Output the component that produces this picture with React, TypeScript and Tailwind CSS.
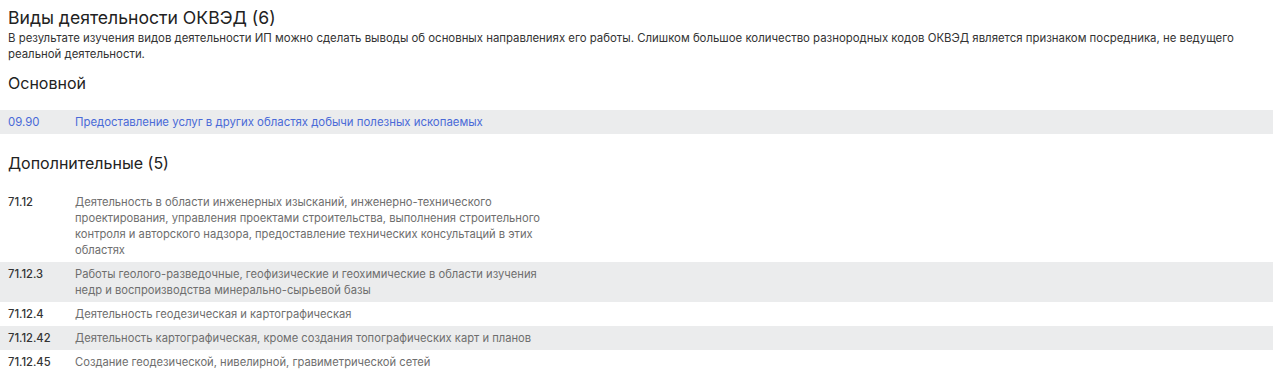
const MAIN = { code: '09.90', title: 'Предоставление услуг в других областях добычи полезных ископаемых' };

const EXTRA = [
  {
    code: '71.12',
    title:
      'Деятельность в области инженерных изысканий, инженерно-технического проектирования, управления проектами строительства, выполнения строительного контроля и авторского надзора, предоставление технических консультаций в этих областях',
  },
  {
    code: '71.12.3',
    title:
      'Работы геолого-разведочные, геофизические и геохимические в области изучения недр и воспроизводства минерально-сырьевой базы',
  },
  { code: '71.12.4', title: 'Деятельность геодезическая и картографическая' },
  { code: '71.12.42', title: 'Деятельность картографическая, кроме создания топографических карт и планов' },
  { code: '71.12.45', title: 'Создание геодезической, нивелирной, гравиметрической сетей' },
];

export default function App() {
  return (
    <div className="min-h-[381px] bg-white pt-[6px] pr-[7px] font-['Inter',sans-serif] text-[#222]">
      <div className="px-2">
        <h1 className="text-[17.6px] leading-6 text-[#222]">Виды деятельности ОКВЭД (6)</h1>
        <p className="pr-6 text-[11.4px] leading-4 text-[#333]">
          В результате изучения видов деятельности ИП можно сделать выводы об основных направлениях его работы. Слишком большое
          количество разнородных кодов ОКВЭД является признаком посредника, не ведущего реальной деятельности.
        </p>
        <h2 className="mt-[11px] text-[16px] leading-5">Основной</h2>
      </div>

      <div className="mt-[17px] flex bg-[#ebeced] py-1 text-[11.4px] leading-4 text-[#4a6ad8]">
        <div className="w-[75px] shrink-0 pl-2">{MAIN.code}</div>
        <div>{MAIN.title}</div>
      </div>

      <h2 className="mt-[19px] px-2 text-[16px] leading-5">Дополнительные (5)</h2>

      <div className="mt-[17px]">
        {EXTRA.map((row, i) => (
          <div
            key={row.code}
            className={`flex py-1 text-[11.2px] leading-4 ${i % 2 === 1 ? 'bg-[#ebeced]' : 'bg-white'}`}
          >
            <div className="w-[75px] shrink-0 pl-2 font-medium text-[#333]">{row.code}</div>
            <div className="max-w-[475px] text-[#6e6e6e]">{row.title}</div>
          </div>
        ))}
      </div>
    </div>
  );
}
